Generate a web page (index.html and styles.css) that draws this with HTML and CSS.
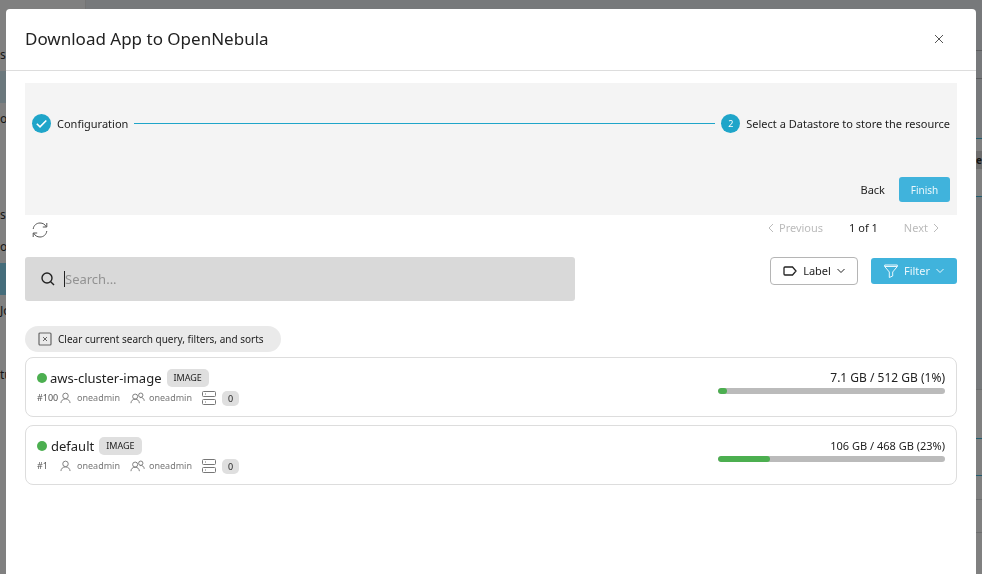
FILE: index.html
```html
<!DOCTYPE html>
<html lang="en">
<head>
<meta charset="utf-8">
<title>Download App to OpenNebula</title>
<link rel="stylesheet" href="styles.css">
</head>
<body>
<svg class="sprite" aria-hidden="true">
  <symbol id="user" viewBox="0 0 12 12"><circle cx="6" cy="3.700" r="3"/><path d="M1 11.500C1.200 9 3 7 6 7s4.800 2 5 4.500"/></symbol>
  <symbol id="group" viewBox="0 0 16 12"><circle cx="5.500" cy="4.500" r="2.700"/><path d="M1 11.500c.2-2.500 1.800-4.200 4.500-4.200s4.300 1.700 4.500 4.200"/><circle cx="11.500" cy="3" r="2.300"/><path d="M10.500 5.600c2.600-.6 4.400.8 4.700 3.400"/></symbol>
  <symbol id="server" viewBox="0 0 14 14"><rect x="0.500" y="0.500" width="13" height="5" rx="1"/><rect x="0.500" y="8.500" width="13" height="5" rx="1"/><path d="M3 3h1M3 11h1"/></symbol>
  <symbol id="down" viewBox="0 0 8 6"><path d="M.5 1 4 4.500 7.500 1"/></symbol>
</svg>
<div class="app">
  <nav class="sidebar" aria-label="Main">
    <span class="item">s</span>
    <span class="item hover"></span>
    <span class="item">or</span>
    <span class="item"></span>
    <span class="item"></span>
    <span class="item">s</span>
    <span class="item">ol</span>
    <span class="item active"></span>
    <span class="item">Jo</span>
    <span class="item"></span>
    <span class="item">tu</span>
  </nav>
  <div class="page">
    <div class="top"></div>
    <div class="bar"></div>
    <div class="gap"></div>
    <div class="field"><span class="tag">me</span></div>
    <div class="gap large"></div>
    <div class="line row-a"></div>
    <div class="line blue row-b"></div>
    <div class="line blue row-c"></div>
    <div class="line row-d"></div>
    <div class="line rest"></div>
  </div>
</div>
<div class="backdrop">
  <section class="dialog" role="dialog" aria-labelledby="title">
    <header class="header">
      <h1 id="title">Download App to OpenNebula</h1>
      <button class="plain close" aria-label="Close"><svg width="10" height="10" viewBox="0 0 10 10"><path d="M1 1l8 8M9 1 1 9"/></svg></button>
    </header>
    <div class="content">
      <div class="stepper">
        <ol class="steps">
          <li><span class="bullet"><svg width="19" height="19" viewBox="0 0 19 19"><path stroke-width="1.600" d="M4.800 9.700 8 12.800l6.300-6.300"/></svg></span>Configuration</li>
          <li class="connector" aria-hidden="true"></li>
          <li><span class="bullet">2</span>Select a Datastore to store the resource</li>
        </ol>
        <div class="actions">
          <button class="plain">Back</button>
          <button class="primary finish">Finish</button>
        </div>
      </div>
      <div class="pager-row">
        <button class="plain refresh" aria-label="Refresh"><svg width="16" height="16" viewBox="0 0 16 16"><path d="M1.200 7C1.700 3.300 4.500 1 8 1c2.800 0 5 1.300 6.300 3.800M14.800 1v4h-4M14.800 9c-.5 3.700-3.300 6-6.800 6-2.800 0-5-1.300-6.300-3.800M1.200 15v-4h4"/></svg></button>
        <div class="pager">
          <button class="plain" disabled><svg width="6" height="10" viewBox="0 0 6 10"><path d="M5 1 1 5l4 4"/></svg>Previous</button>
          <span>1 of 1</span>
          <button class="plain" disabled>Next<svg width="6" height="10" viewBox="0 0 6 10"><path d="m1 1 4 4-4 4"/></svg></button>
        </div>
      </div>
      <div class="toolbar">
        <label class="search">
          <svg width="14" height="14" viewBox="0 0 14 14"><g stroke-width="1.400"><circle cx="6" cy="6" r="5"/><path d="m9.700 9.700 3.300 3.300"/></g></svg>
          <input type="text" placeholder="Search..." aria-label="Search">
        </label>
        <div class="tools">
          <button class="outline"><svg width="14" height="10" viewBox="0 0 14 10"><path stroke-width="1.300" d="M2 1h7.500L13 5 9.500 9H2Q1 9 1 8V2Q1 1 2 1z"/></svg>Label<svg width="8" height="6"><use href="#down"/></svg></button>
          <button class="primary filter"><svg width="14" height="14" viewBox="0 0 14 14"><path d="M.7 1h12.600v1.500L8.700 8v4l-3.400 1.500V8L.7 2.500zM.7 2.500h12.600"/></svg>Filter<svg width="8" height="6"><use href="#down"/></svg></button>
        </div>
      </div>
      <button class="chip"><svg width="14" height="14" viewBox="0 0 14 14"><rect stroke-width="1.200" x="1" y="1" width="12" height="12" rx="1"/><path d="m5 5 4 4M9 5 5 9"/></svg>Clear current search query, filters, and sorts</button>
      <div class="list">
        <article class="card selected">
          <div class="info">
            <div class="name"><i class="dot"></i><span>aws-cluster-image</span><span class="badge">IMAGE</span></div>
            <div class="meta">
              <span class="id">#100</span>
              <span class="owner"><svg width="11" height="12"><use href="#user"/></svg>oneadmin</span>
              <span class="group"><svg width="15" height="12"><use href="#group"/></svg>oneadmin</span>
              <span class="hosts"><svg width="14" height="14"><use href="#server"/></svg><span class="badge count">0</span></span>
            </div>
          </div>
          <div class="usage"><span>7.1 GB / 512 GB (1%)</span><div class="track"><div class="fill" style="width:4%"></div></div></div>
        </article>
        <article class="card">
          <div class="info">
            <div class="name"><i class="dot"></i><span>default</span><span class="badge">IMAGE</span></div>
            <div class="meta">
              <span class="id">#1</span>
              <span class="owner"><svg width="11" height="12"><use href="#user"/></svg>oneadmin</span>
              <span class="group"><svg width="15" height="12"><use href="#group"/></svg>oneadmin</span>
              <span class="hosts"><svg width="14" height="14"><use href="#server"/></svg><span class="badge count">0</span></span>
            </div>
          </div>
          <div class="usage"><span>106 GB / 468 GB (23%)</span><div class="track"><div class="fill" style="width:23%"></div></div></div>
        </article>
      </div>
    </div>
  </section>
</div>
</body>
</html>
```
FILE: styles.css
```css
* { box-sizing: border-box; }
body { margin: 0; height: 100vh; overflow: hidden; font: 11px/16px "Noto Sans", sans-serif; color: #222; background: #77797b; }
button, input { font: inherit; color: inherit; }
svg { fill: none; stroke: currentColor; stroke-width: 1; flex: none; }
.sprite { position: absolute; width: 0; height: 0; }

.app { display: flex; height: 100%; }
.sidebar { flex: none; width: 86px; padding-top: 39px; background: #808080; border-right: 1px solid #747474; color: #151515; font-size: 12px; }
.item { display: block; height: 32px; line-height: 32px; }
.hover { background: #6b787d; }
.active { background: #456d7b; }
.page { flex: 1; display: flex; flex-direction: column; text-align: right; }
.top { height: 50px; }
.bar { height: 29px; border: solid #5b5c5e; border-width: 1px 0; }
.gap { height: 59px; }
.field { height: 59px; padding-top: 12px; border: solid #225e70; border-width: 1px 0; background: #808080; }
.tag { display: block; height: 18px; line-height: 18px; background: #6d6d6d; color: #151515; font-size: 10px; font-weight: bold; }
.large { height: 192px; }
.line { border-top: 1px solid #6d6e6f; background: #808080; }
.blue { border-color: #225e70; }
.row-a { height: 49px; }
.row-b { height: 37px; }
.row-c { height: 24px; }
.row-d { height: 33px; }
.rest { flex: 1; }

.backdrop { position: fixed; inset: 0; padding: 9px 6px 0; display: flex; }
.dialog { flex: 1; background: #fff; border-radius: 4px 4px 0 0; overflow: hidden; }
.header { display: flex; align-items: center; justify-content: space-between; height: 62px; padding: 0 32px 2px 19px; border-bottom: 1px solid #ddd; }
h1 { margin: 0; font-size: 17px; line-height: 24px; font-weight: 400; }
.content { padding: 12px 19px; }

.plain { display: flex; align-items: center; gap: 5px; padding: 0; border: 0; background: none; }
.close, .refresh { color: #555; }
.primary { border: 0; border-radius: 3px; background: #40b3dc; color: #e9f7fc; }

.stepper { padding: 31px 7px 13px; background: #f4f4f4; }
.steps { display: flex; align-items: center; gap: 6px; margin: 0; padding: 0; list-style: none; }
.steps li { display: flex; align-items: center; gap: 6px; }
.steps .connector { flex: 1; height: 1px; background: #1fa5c9; }
.bullet { display: flex; align-items: center; justify-content: center; width: 19px; height: 19px; border-radius: 50%; background: #1fa5c9; color: #fff; font-size: 9px; }
.actions { display: flex; justify-content: flex-end; gap: 14px; margin-top: 44px; }
.finish { width: 51px; height: 25px; padding: 0; font-size: 10px; }

.pager-row { display: flex; justify-content: space-between; align-items: center; height: 30px; padding: 0 18px 0 7px; }
.pager { display: flex; gap: 26px; padding-bottom: 4px; }
.pager .plain:disabled { color: #bbb; }

.toolbar { display: flex; justify-content: space-between; align-items: flex-start; margin-top: 12px; }
.search { display: flex; align-items: center; gap: 9px; width: 59%; height: 44px; padding: 0 16px; border-radius: 3px; background: #d9d9d9; font-size: 13px; }
.search input { flex: 1; min-width: 0; height: 16px; padding: 0; border: 0; border-left: 1px solid #222; background: none; outline: 0; }
.search input::placeholder { color: #929292; opacity: 1; }
.tools { display: flex; align-items: center; gap: 13px; }
.outline, .filter { display: flex; align-items: center; justify-content: center; padding: 0; }
.outline { gap: 6px; width: 88px; height: 28px; border: 1px solid #b5b5b5; border-radius: 4px; background: #fff; }
.filter { gap: 6px; width: 86px; height: 26px; }

.chip { display: flex; align-items: center; gap: 6px; height: 26px; margin-top: 25px; padding: 0 17px 0 13px; border: 0; border-radius: 13px; background: #eaeaea; font-size: 10px; }
.chip svg { color: #666; }

.list { display: grid; gap: 8px; margin-top: 5px; }
.card { display: flex; justify-content: space-between; height: 60px; padding: 10px 11px; border: 1px solid #ddd; border-radius: 8px; }
.name { display: flex; align-items: center; gap: 4px; height: 20px; font-size: 13px; }
.dot { width: 10px; height: 10px; border-radius: 50%; background: #4caf50; }
.selected .dot { margin-right: -1px; }
.badge { margin-left: 1px; padding: 0 7px; border-radius: 5px; background: #dfdfdf; font-size: 9px; line-height: 18px; }
.meta { display: flex; align-items: center; height: 20px; color: #777; font-size: 9px; }
.meta span { display: flex; align-items: center; }
.meta .id { width: 23px; color: #555; }
.owner { gap: 6px; width: 70px; }
.group { gap: 4px; width: 72px; }
.hosts { gap: 5px; }
.meta .count { height: 15px; line-height: 15px; padding: 0 6px; color: #222; }
.usage { display: flex; flex-direction: column; width: 25%; margin-top: 1px; text-align: right; line-height: 18px; }
.selected .usage { font-size: 12px; }
.track { height: 6px; margin-top: 1px; border-radius: 3px; background: #bbb; overflow: hidden; }
.fill { height: 6px; border-radius: 3px; background: #4caf50; }
```
